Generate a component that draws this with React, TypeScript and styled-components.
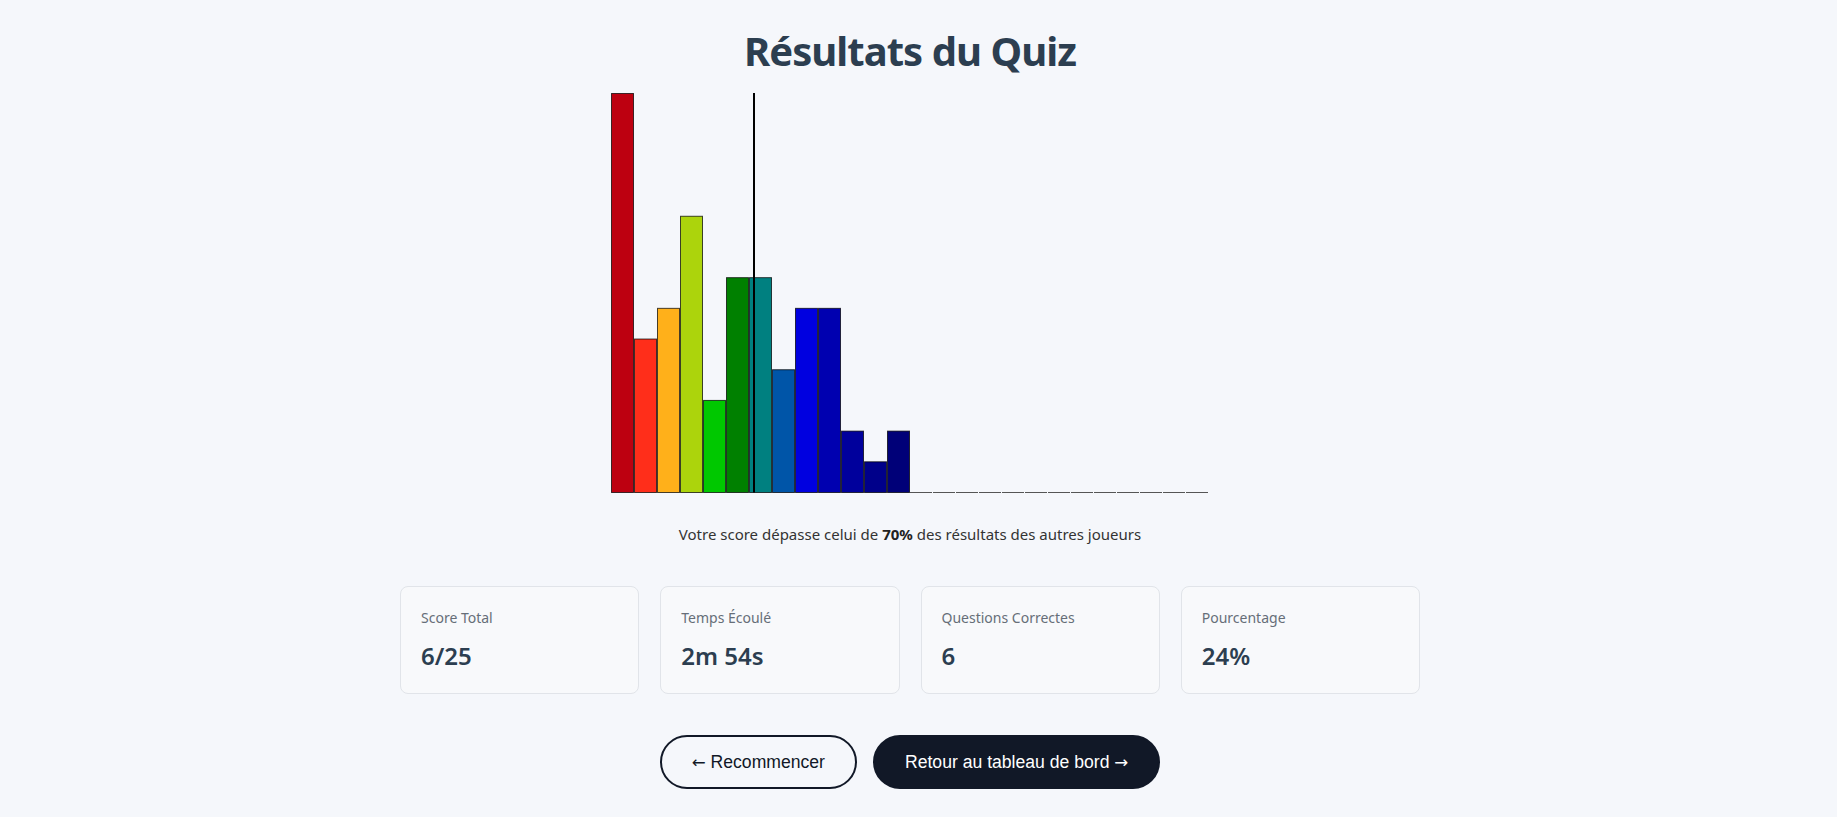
import React from "react";
import styled, { createGlobalStyle } from "styled-components";

const GlobalStyle = createGlobalStyle`
  html, body {
    margin: 0;
    padding: 0;
    background: #f5f7fb;
  }
  body {
    font-family: "Noto Sans", "Open Sans", sans-serif;
  }
`;

const Page = styled.div`
  box-sizing: border-box;
  min-height: 817px;
  padding: 27px 17px 24px 0;
  display: flex;
  flex-direction: column;
  align-items: center;
`;

const Title = styled.h1`
  margin: 0;
  font-size: 40px;
  line-height: 48px;
  font-weight: 700;
  color: #2c3e50;
  letter-spacing: -0.95px;
`;

const ChartWrap = styled.div`
  margin-top: 17px;
  width: 600px;
  height: 402px;
`;

const Percentile = styled.p`
  margin: 30px 0 0;
  font-size: 15px;
  line-height: 20px;
  color: #333;
  strong {
    font-weight: 700;
    color: #222;
  }
`;

const Stats = styled.div`
  margin-top: 42px;
  width: 1020px;
  display: grid;
  grid-template-columns: repeat(4, 1fr);
  gap: 21px;
`;

const Card = styled.div`
  box-sizing: border-box;
  background: #f8f9fb;
  border: 1px solid #e1e4e9;
  border-radius: 8px;
  padding: 21px 20px;
`;

const Label = styled.div`
  font-size: 14px;
  line-height: 20px;
  color: #666e78;
  margin-bottom: 12px;
`;

const Value = styled.div`
  font-size: 24px;
  line-height: 32px;
  font-weight: 600;
  color: #2c3e50;
`;

const Actions = styled.div`
  margin-top: 41px;
  display: flex;
  gap: 16px;
`;

const Button = styled.button<{ $primary?: boolean }>`
  box-sizing: border-box;
  height: 54px;
  padding: 0 30px;
  border-radius: 999px;
  font-family: "Liberation Sans", Arial, sans-serif;
  font-size: 17.6px;
  cursor: pointer;
  border: 2px solid #111827;
  background: ${(p) => (p.$primary ? "#111827" : "transparent")};
  color: ${(p) => (p.$primary ? "#ffffff" : "#111827")};
`;

const Arrow = styled.span`
  font-family: "DejaVu Sans", sans-serif;
  font-size: 0.95em;
`;

const bins: { v: number; c: string }[] = [
  { v: 13, c: "#bd0010" },
  { v: 5, c: "#ff2e1a" },
  { v: 6, c: "#ffb01a" },
  { v: 9, c: "#acd40c" },
  { v: 3, c: "#00c800" },
  { v: 7, c: "#008000" },
  { v: 7, c: "#008080" },
  { v: 4, c: "#0055a8" },
  { v: 6, c: "#0000e0" },
  { v: 6, c: "#0000b0" },
  { v: 2, c: "#00009c" },
  { v: 1, c: "#00008a" },
  { v: 2, c: "#000078" },
  ...Array.from({ length: 13 }, () => ({ v: 0, c: "#444" })),
];

const Histogram: React.FC = () => {
  const pitch = 23;
  const base = 400.5;
  const h = 399;
  const max = 13;
  return (
    <svg width="600" height="402" viewBox="0 0 600 402">
      {bins.map((b, i) => {
        const x = 1 + i * pitch;
        if (b.v === 0) {
          return (
            <line
              key={i}
              x1={x}
              x2={x + 22}
              y1={base}
              y2={base}
              stroke="#555"
              strokeWidth={1}
            />
          );
        }
        const bh = (b.v / max) * h;
        return (
          <rect
            key={i}
            x={x + 0.5}
            y={base - bh}
            width={22}
            height={bh}
            fill={b.c}
            stroke="rgba(0,0,0,0.72)"
            strokeWidth={1}
          />
        );
      })}
      <line x1={144} x2={144} y1={1} y2={base} stroke="#000" strokeWidth={2} />
    </svg>
  );
};

const stats = [
  { label: "Score Total", value: "6/25" },
  { label: "Temps Écoulé", value: "2m 54s" },
  { label: "Questions Correctes", value: "6" },
  { label: "Pourcentage", value: "24%" },
];

export default function App() {
  return (
    <>
      <GlobalStyle />
      <Page>
        <Title>Résultats du Quiz</Title>
        <ChartWrap>
          <Histogram />
        </ChartWrap>
        <Percentile>
          Votre score dépasse celui de <strong>70%</strong> des résultats des autres joueurs
        </Percentile>
        <Stats>
          {stats.map((s) => (
            <Card key={s.label}>
              <Label>{s.label}</Label>
              <Value>{s.value}</Value>
            </Card>
          ))}
        </Stats>
        <Actions>
          <Button>
            <Arrow>←</Arrow> Recommencer
          </Button>
          <Button $primary>
            Retour au tableau de bord <Arrow>→</Arrow>
          </Button>
        </Actions>
      </Page>
    </>
  );
}
